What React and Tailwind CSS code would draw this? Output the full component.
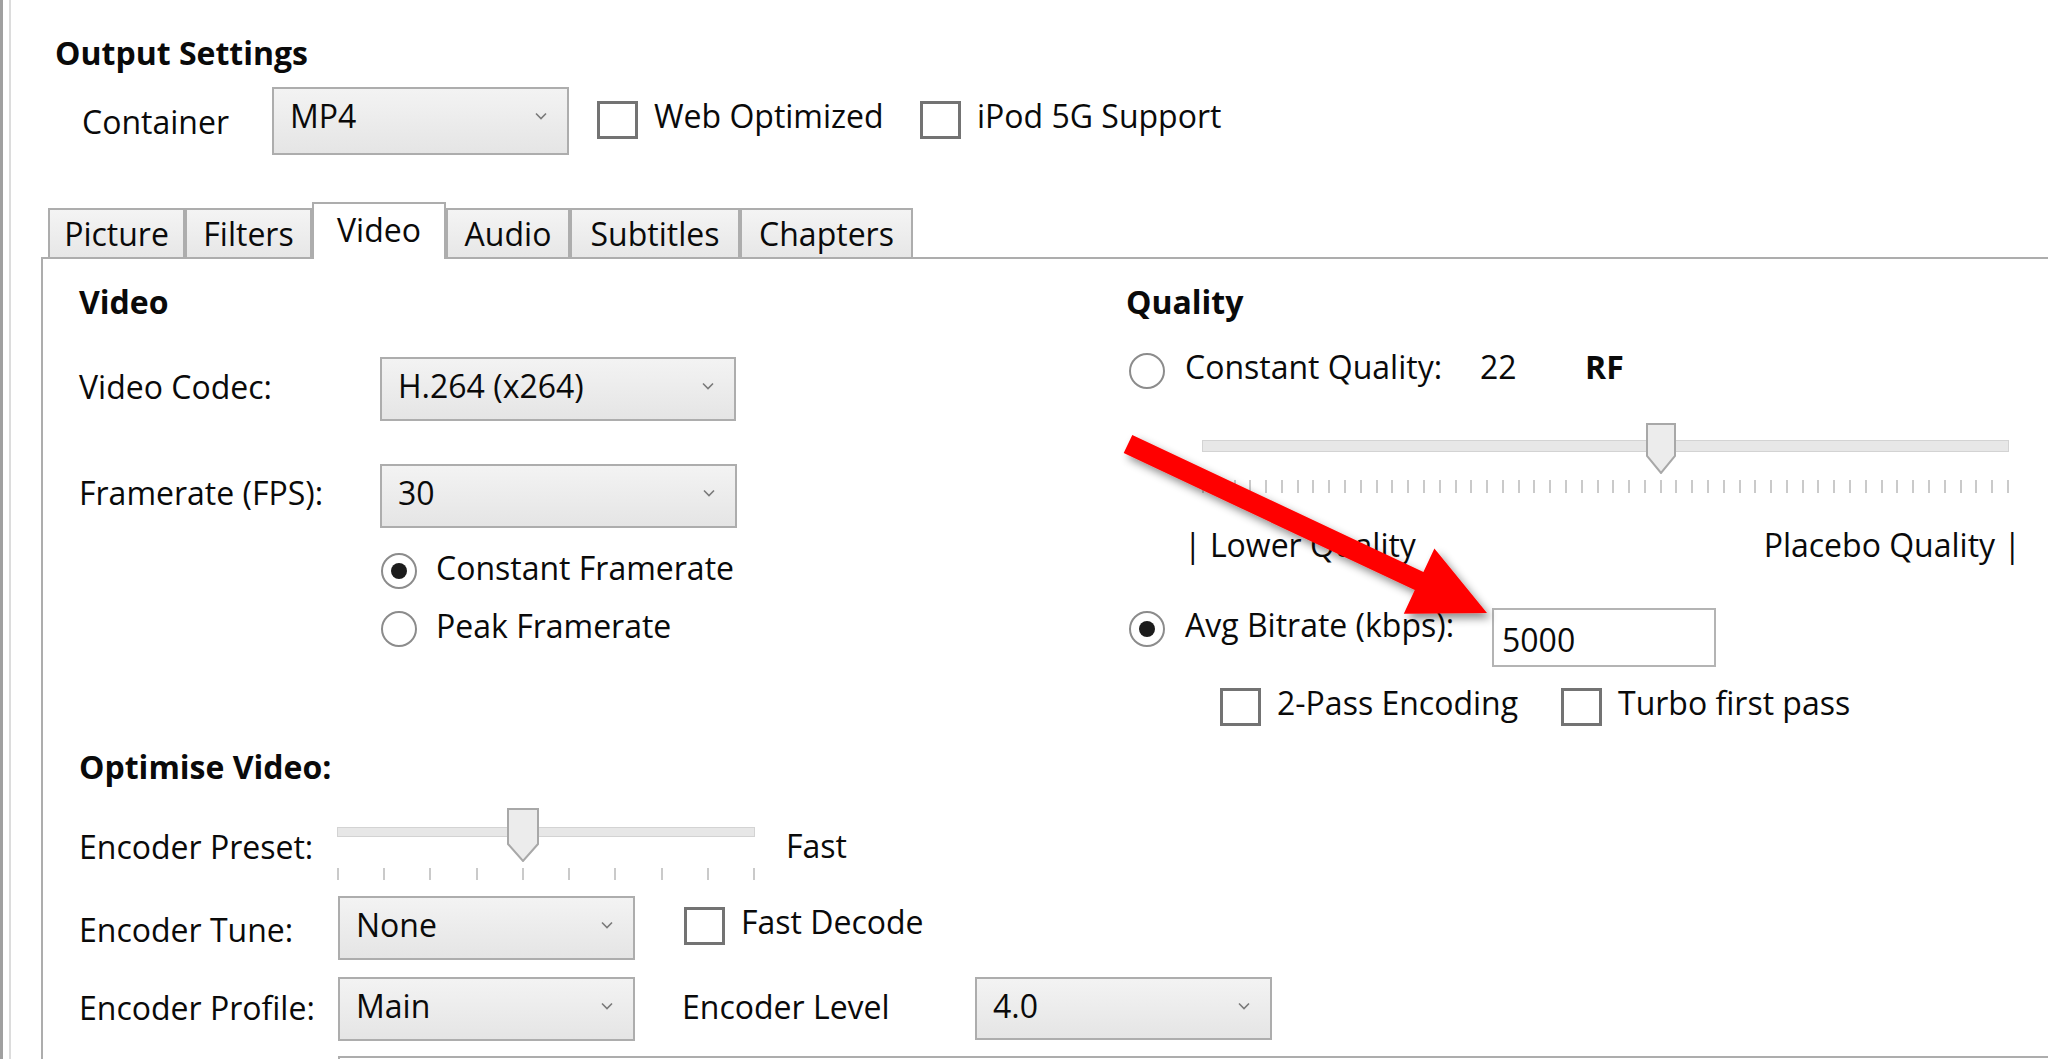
import React from 'react';

function Chevron() {
  return (
    <svg width="12" height="8" viewBox="0 0 12 8" className="shrink-0">
      <path d="M1 1.5 L6 6.5 L11 1.5" fill="none" stroke="#7a7a7a" strokeWidth="1.6" />
    </svg>
  );
}

function Dropdown({ value, className }) {
  return (
    <div
      className={`flex shrink-0 items-start justify-between border-2 border-[#adadad] bg-linear-to-b from-[#f3f3f3] to-[#e5e5e5] pl-[16px] pr-[20px] pt-[11px] ${className}`}
    >
      <span className="whitespace-nowrap">{value}</span>
      <span className="mt-[12px]">
        <Chevron />
      </span>
    </div>
  );
}

function Check({ label, className = '' }) {
  return (
    <div className={`flex shrink-0 items-start ${className}`}>
      <div className="mt-[1px] h-[38px] w-[41px] shrink-0 border-[3px] border-[#737373] bg-white" />
      <span className="ml-[16px] whitespace-nowrap">{label}</span>
    </div>
  );
}

function Radio({ checked }) {
  return (
    <div className="flex h-[36px] w-[36px] shrink-0 items-center justify-center rounded-full border-2 border-[#8c8c8c] bg-white">
      {checked && <div className="h-[16px] w-[16px] rounded-full bg-[#1c1c1c]" />}
    </div>
  );
}

function RadioRow({ label, checked, className }) {
  return (
    <div className={`flex items-start ${className}`}>
      <div className="mt-[1px]">
        <Radio checked={checked} />
      </div>
      <span className="ml-[19px] whitespace-nowrap">{label}</span>
    </div>
  );
}

function Thumb({ w, h }) {
  const mid = w / 2;
  return (
    <svg width={w} height={h} viewBox={`0 0 ${w} ${h}`}>
      <path
        d={`M1 1 H${w - 1} V${h - 18} L${mid} ${h - 1} L1 ${h - 18} Z`}
        fill="#ececec"
        stroke="#a8a8a8"
        strokeWidth="2"
      />
    </svg>
  );
}

function Tab({ active, w, children }) {
  if (active) {
    return (
      <div className={`h-[57px] shrink-0 border-2 border-b-0 border-[#adadad] bg-white pt-[10px] text-center ${w}`}>
        {children}
      </div>
    );
  }
  return (
    <div
      className={`mb-[2px] h-[49px] shrink-0 border-2 border-b-0 border-[#adadad] bg-linear-to-b from-[#f4f4f4] to-[#e7e7e7] pt-[8px] text-center ${w}`}
    >
      {children}
    </div>
  );
}

export default function App() {
  const presetTicks = Array.from({ length: 10 });
  const qualityTicks = Array.from({ length: 52 });

  return (
    <div className="relative flex h-[1059px] w-[2048px] overflow-hidden bg-white font-['Open_Sans',sans-serif] text-[32px] leading-[32px] text-[#0a0a0a]">
      {/* window frame */}
      <div className="w-[3px] shrink-0 bg-[#a0a0a0]" />
      <div className="w-[6px] shrink-0 bg-white" />
      <div className="w-[2px] shrink-0 bg-[#dcdcdc]" />

      <div className="flex min-w-0 flex-1 flex-col">
        <h1 className="ml-[44px] mt-[37px] font-bold">Output Settings</h1>

        <div className="mt-[18px] flex h-[68px] items-start">
          <span className="ml-[71px] mt-[19px] w-[190px] shrink-0">Container</span>
          <Dropdown value="MP4" className="h-[68px] w-[297px]" />
          <Check label="Web Optimized" className="ml-[28px] mt-[13px] w-[323px]" />
          <Check label="iPod 5G Support" className="mt-[13px]" />
        </div>

        {/* tabs */}
        <div className="relative z-10 -mb-[2px] ml-[37px] mt-[47px] flex h-[57px] items-end">
          <Tab w="w-[137px]">Picture</Tab>
          <Tab w="w-[127px]">Filters</Tab>
          <Tab active w="w-[134px]">Video</Tab>
          <Tab w="w-[124px]">Audio</Tab>
          <Tab w="w-[170px]">Subtitles</Tab>
          <Tab w="w-[173px]">Chapters</Tab>
        </div>

        {/* tab panel */}
        <div className="ml-[30px] flex flex-1 flex-col border-l-2 border-t-2 border-[#adadad]">
          <div className="flex">
            {/* left column */}
            <div className="w-[1083px] shrink-0 pl-[36px]">
              <div className="mt-[27px] font-bold">Video</div>

              <div className="mt-[39px] flex h-[64px] items-start">
                <span className="mt-[14px] w-[301px] shrink-0">Video Codec:</span>
                <Dropdown value="H.264 (x264)" className="h-[64px] w-[356px]" />
              </div>

              <div className="mt-[43px] flex h-[64px] items-start">
                <span className="mt-[13px] w-[301px] shrink-0">Framerate (FPS):</span>
                <Dropdown value="30" className="h-[64px] w-[357px]" />
              </div>

              <RadioRow label="Constant Framerate" checked className="ml-[302px] mt-[24px]" />
              <RadioRow label="Peak Framerate" className="ml-[302px] mt-[21px]" />

              <div className="mt-[104px] font-bold">Optimise Video:</div>

              <div className="mt-[25px] flex h-[72px] items-start">
                <span className="mt-[23px] w-[258px] shrink-0">Encoder Preset:</span>
                <div className="relative flex h-[72px] w-[418px] shrink-0 flex-col">
                  <div className="mt-[19px] h-[10px] border border-[#d3d3d3] bg-[#e7e7e7]" />
                  <div className="mt-[31px] flex h-[12px] justify-between">
                    {presetTicks.map((_, i) => (
                      <div key={i} className="h-[12px] w-[2px] bg-[#cacaca]" />
                    ))}
                  </div>
                  <div className="absolute left-[170px] top-0">
                    <Thumb w={32} h={54} />
                  </div>
                </div>
                <span className="ml-[31px] mt-[22px]">Fast</span>
              </div>

              <div className="mt-[16px] flex h-[64px] items-start">
                <span className="mt-[18px] w-[259px] shrink-0">Encoder Tune:</span>
                <Dropdown value="None" className="h-[64px] w-[297px]" />
                <Check label="Fast Decode" className="ml-[49px] mt-[10px]" />
              </div>

              <div className="mt-[17px] flex h-[64px] items-start">
                <span className="mt-[15px] w-[259px] shrink-0">Encoder Profile:</span>
                <Dropdown value="Main" className="h-[64px] w-[297px]" />
                <span className="ml-[47px] mt-[14px] w-[293px] shrink-0">Encoder Level</span>
                <Dropdown value="4.0" className="h-[63px] w-[297px]" />
              </div>
            </div>

            {/* right column */}
            <div className="flex min-w-0 flex-1 flex-col">
              <div className="mt-[27px] font-bold">Quality</div>

              <div className="mt-[33px] flex items-start">
                <div className="ml-[3px] mt-[2px]">
                  <Radio />
                </div>
                <span className="ml-[20px] w-[295px] shrink-0">Constant Quality:</span>
                <span className="w-[105px] shrink-0">22</span>
                <span className="font-bold">RF</span>
              </div>

              <div className="relative ml-[76px] mt-[34px] flex h-[70px] w-[807px] flex-col">
                <div className="mt-[17px] h-[12px] border border-[#d3d3d3] bg-[#e7e7e7]" />
                <div className="mt-[28px] flex h-[13px] justify-between">
                  {qualityTicks.map((_, i) => (
                    <div key={i} className="h-[13px] w-[2px] bg-[#cacaca]" />
                  ))}
                </div>
                <div className="absolute left-[444px] top-0">
                  <Thumb w={30} h={51} />
                </div>
              </div>

              <div className="ml-[58px] mt-[36px] flex w-[837px] justify-between">
                <span>| Lower Quality</span>
                <span>Placebo Quality |</span>
              </div>

              <div className="mt-[47px] flex items-start">
                <div className="ml-[3px] mt-[3px]">
                  <Radio checked />
                </div>
                <span className="ml-[20px] mt-[1px] w-[307px] shrink-0">Avg Bitrate (kbps):</span>
                <div className="h-[59px] w-[224px] shrink-0 border-2 border-[#b4b4b4] bg-white pl-[8px] pt-[14px]">
                  5000
                </div>
              </div>

              <div className="ml-[94px] mt-[20px] flex items-start">
                <Check label="2-Pass Encoding" className="w-[341px]" />
                <Check label="Turbo first pass" />
              </div>
            </div>
          </div>

          {/* top of the next field, cut by the screenshot */}
          <div className="ml-[295px] mt-[15px] h-[40px] border-l-2 border-t-2 border-[#adadad]" />
        </div>
      </div>

      {/* red annotation arrow */}
      <svg
        className="pointer-events-none absolute inset-0"
        width="2048"
        height="1059"
        viewBox="0 0 2048 1059"
      >
        <defs>
          <filter id="arrowShadow" x="-20%" y="-20%" width="140%" height="140%">
            <feDropShadow dx="4" dy="5" stdDeviation="4" floodColor="#000" floodOpacity="0.45" />
          </filter>
        </defs>
        <polygon
          points="1132.3,435 1423.4,572 1434.4,548.5 1487,613 1403.8,613.7 1414.8,590.1 1123.7,453"
          fill="#ff0000"
          filter="url(#arrowShadow)"
        />
      </svg>
    </div>
  );
}
